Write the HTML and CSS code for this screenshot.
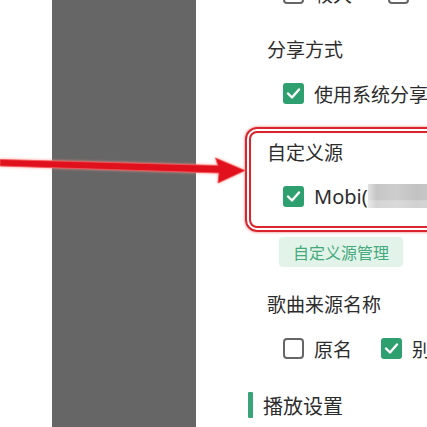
FILE: index.html
```html
<!DOCTYPE html>
<html lang="zh-CN">

<head>
    <meta charset="UTF-8">
    <meta name="viewport" content="width=device-width, initial-scale=1.0">
    <title>设置</title>
    <link rel="stylesheet" href="styles.css">
</head>

<body>
    <div class="page">
        <div class="gutter"></div>
        <div class="shade"></div>

        <div class="settings">
            <div class="options wide top">
                <label class="option">
                    <svg class="box" viewBox="0 0 21 21"><rect x="1" y="1" width="19" height="19" rx="3" /></svg>
                    较大
                </label>
                <label class="option">
                    <svg class="box" viewBox="0 0 21 21"><rect x="1" y="1" width="19" height="19" rx="3" /></svg>
                    中等
                </label>
            </div>

            <div class="title first">分享方式</div>
            <div class="options">
                <label class="option">
                    <svg class="box on" viewBox="0 0 21 21"><rect x="0" y="0" width="21" height="21" rx="3" /><polyline points="5,10.5 9,14.5 16,6.5" /></svg>
                    使用系统分享
                </label>
            </div>

            <div class="marked">
                <div class="title">自定义源</div>
                <div class="options">
                    <label class="option">
                        <svg class="box on" viewBox="0 0 21 21"><rect x="0" y="0" width="21" height="21" rx="3" /><polyline points="5,10.5 9,14.5 16,6.5" /></svg>
                        <span class="source"><span class="latin">Mobi(</span><span class="hidden-name"></span></span>
                    </label>
                </div>
            </div>

            <div class="btn">自定义源管理</div>

            <div class="title after-btn">歌曲来源名称</div>
            <div class="options">
                <label class="option">
                    <svg class="box" viewBox="0 0 21 21"><rect x="1" y="1" width="19" height="19" rx="3" /></svg>
                    原名
                </label>
                <label class="option">
                    <svg class="box on" viewBox="0 0 21 21"><rect x="0" y="0" width="21" height="21" rx="3" /><polyline points="5,10.5 9,14.5 16,6.5" /></svg>
                    别名
                </label>
            </div>

            <div class="section">
                <span class="bar"></span>
                播放设置
            </div>
        </div>
    </div>

    <!-- 标注箭头 -->
    <svg class="arrow" width="260" height="200" viewBox="0 0 260 200">
        <polygon points="0,159.5 218,165.5 215.5,158 245,170.5 218,183 219,173 0,166" />
    </svg>
</body>

</html>
```

FILE: styles.css
```css
* {
    margin: 0;
    padding: 0;
    box-sizing: border-box;
}

html,
body {
    width: 427px;
    height: 427px;
    overflow: hidden;
    background: #fff;
}

body {
    position: relative;
    font-family: "Noto Sans CJK SC", "Noto Sans", sans-serif;
    color: #2c2c2c;
}

.page {
    display: flex;
    height: 427px;
}

.gutter {
    width: 52px;
    flex-shrink: 0;
}

.shade {
    width: 144px;
    flex-shrink: 0;
    background-color: #666;
}

.settings {
    flex: 1;
    padding-left: 52px;
    white-space: nowrap;
}

/* 标题 */
.title {
    height: 30px;
    line-height: 30px;
    margin-top: 29px;
    margin-left: 19px;
    font-size: 19px;
}

.title.first {
    margin-top: 26px;
}

.title.after-btn {
    margin-top: 22px;
}

/* 选项 */
.options {
    display: flex;
    align-items: center;
    gap: 29px;
    height: 30px;
    margin-top: 14px;
    margin-left: 35px;
    font-size: 19px;
}

.options.wide {
    gap: 36px;
}

.options.top {
    margin-top: -22px;
}

.option {
    display: flex;
    align-items: center;
    gap: 10px;
}

.box {
    display: block;
    width: 21px;
    height: 21px;
    flex-shrink: 0;
}

.box rect {
    fill: #fff;
    stroke: #666;
    stroke-width: 2;
}

.box.on rect {
    fill: #2e9f6f;
    stroke: none;
}

.box polyline {
    fill: none;
    stroke: #fff;
    stroke-width: 2.4;
    stroke-linecap: round;
    stroke-linejoin: round;
}

.source {
    display: flex;
    align-items: center;
}

.latin {
    font-family: "Noto Sans", sans-serif;
    font-size: 20px;
}

.hidden-name {
    display: inline-block;
    width: 70px;
    height: 24px;
    background: linear-gradient(180deg, rgba(255, 255, 255, 0) 65%, rgba(255, 255, 255, .25) 70%),
        linear-gradient(90deg, #e2e2e2, #c6c6c6 12%, #cdcdcd 40%, #c2c2c2 70%, #cbcbcb);
    filter: blur(.6px);
}

/* 红框标注 */
.marked {
    position: relative;
}

.marked::before {
    content: "";
    position: absolute;
    top: -10px;
    bottom: -21px;
    left: -3px;
    right: -40px;
    border: 6px double #d9262e;
    border-radius: 12px;
    box-shadow: 0 0 2px 1px rgba(240, 130, 130, .55), inset 0 0 1px rgba(240, 130, 130, .5);
}

.btn {
    display: inline-block;
    height: 30px;
    line-height: 30px;
    margin-top: 26px;
    margin-left: 31px;
    padding: 0 14px;
    border-radius: 4px;
    background-color: #e2f4ea;
    color: #45a97c;
    font-size: 16px;
}

/* 分区标题 */
.section {
    display: flex;
    align-items: center;
    gap: 10px;
    height: 26px;
    margin-top: 29px;
    font-size: 20px;
}

.section .bar {
    width: 5px;
    height: 26px;
    border-radius: 1px;
    background-color: #3aa478;
}

.arrow {
    position: absolute;
    left: 0;
    top: 0;
}

.arrow polygon {
    fill: #e0111d;
    stroke: #f25a5a;
    stroke-width: .8;
    stroke-linejoin: round;
    filter: drop-shadow(0 0 1.5px rgba(255, 140, 140, .9));
}
```
